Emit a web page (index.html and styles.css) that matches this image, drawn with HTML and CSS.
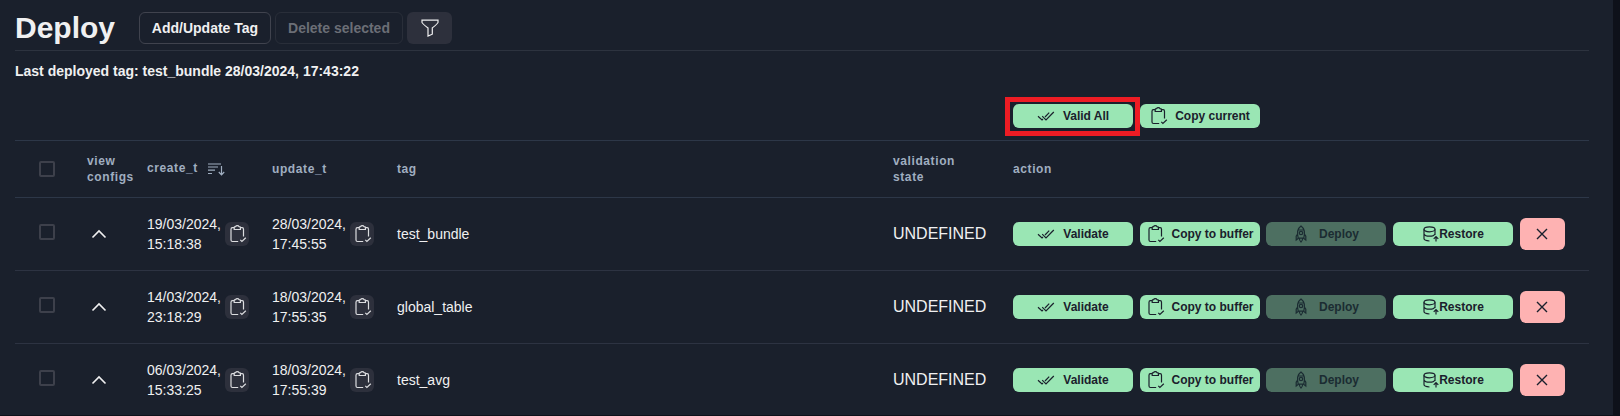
FILE: index.html
```html
<!DOCTYPE html>
<html lang="en">
<head>
<meta charset="utf-8">
<title>Deploy</title>
<link rel="stylesheet" href="styles.css">
</head>
<body>
<svg class="defs" width="0" height="0" aria-hidden="true">
  <symbol id="clip" viewBox="0 0 18 18"><path d="M5 2.700H3.400Q2 2.700 2 4.200V15Q2 16.500 3.500 16.500H9.200M11.700 2.700H13.200Q14.500 2.700 14.500 4.200V11.600M5.200 2.200Q5.200 1.800 6.500 1.700Q7 .6 8.300 .6T10.100 1.700Q11.400 1.800 11.400 2.200V4.500H5.200ZM11.300 14.800L12.900 16.400L16.800 12.800"/></symbol>
  <symbol id="checks" viewBox="0 0 18 10"><path d="M1 5.200L5 9L6 8M12.200 1.600L8 6M5.200 5.200L9 9L16.800 1"/></symbol>
  <symbol id="rocket" viewBox="0 0 12 18"><path d="M3.200 13.200Q1 4.500 6 1Q11 4.500 8.800 13.200ZM2.600 9L1.200 11.200V15L3.400 13.200M9.400 9L10.800 11.200V15L8.600 13.200M4.400 13.400Q4.200 15.500 6 17Q7.800 15.500 7.600 13.400M3.400 5H8.600"/><circle cx="6" cy="8" r="1.700"/></symbol>
  <symbol id="db" viewBox="0 0 16 16"><ellipse cx="6.500" cy="3.300" rx="5.500" ry="2.500"/><path d="M1 3.300V12.600Q1 14.700 6.500 15M12 3.300V9M1 8Q2 10.200 6.500 10.200Q11 10.200 12 8M13 15.500V10.700M10.700 12.800L13 10.500L15.300 12.800"/></symbol>
  <symbol id="close" viewBox="0 0 12 12"><path d="M1 1L11 11M11 1L1 11"/></symbol>
  <symbol id="up" viewBox="0 0 16 10"><path d="M1.500 8.500L8 2L14.500 8.500"/></symbol>
</svg>
<main class="page">
  <header class="top">
    <h1>Deploy</h1>
    <button class="btn add">Add/Update Tag</button>
    <button class="btn del" disabled>Delete selected</button>
    <button class="btn filter" aria-label="Filter"><svg width="18" height="18" viewBox="0 0 18 18"><path d="M1 1.200H17V3.500Q16.800 4.500 11.300 8.900V15.200L7 17V8.900Q1.200 4.500 1 3.500Z"/></svg></button>
  </header>
  <p class="last">Last deployed tag: test_bundle 28/03/2024, 17:43:22</p>
  <div class="bulk">
    <div class="marked"><button class="green"><svg class="i-checks"><use href="#checks"/></svg>Valid All</button></div>
    <button class="green"><svg class="i-clip"><use href="#clip"/></svg>Copy current</button>
  </div>
  <section class="table">
    <div class="row head">
      <span class="box"></span>
      <span class="c-view">view configs</span>
      <span class="c-create"><span>create_t</span><svg width="17" height="13" viewBox="0 0 17 13"><path d="M0 1H13M0 4H10M0 7.200H7M0 10.500H4M13.500 3V11.500M10.800 9L13.500 11.800L16.200 9"/></svg></span>
      <span>update_t</span>
      <span>tag</span>
      <span class="c-valid">validation state</span>
      <span>action</span>
    </div>
    <div class="row">
      <span class="box"></span>
      <svg class="i-up"><use href="#up"/></svg>
      <div class="date"><span>19/03/2024, 15:18:38</span><button class="copy"><svg class="i-clip"><use href="#clip"/></svg></button></div>
      <div class="date"><span>28/03/2024, 17:45:55</span><button class="copy"><svg class="i-clip"><use href="#clip"/></svg></button></div>
      <span>test_bundle</span>
      <span class="state">UNDEFINED</span>
      <div class="actions">
        <button class="green"><svg class="i-checks"><use href="#checks"/></svg>Validate</button>
        <button class="green"><svg class="i-clip"><use href="#clip"/></svg>Copy to buffer</button>
        <button class="green off" disabled><svg class="i-rocket"><use href="#rocket"/></svg>Deploy</button>
        <button class="green"><svg class="i-db"><use href="#db"/></svg>Restore</button>
        <button class="remove"><svg class="i-close"><use href="#close"/></svg></button>
      </div>
    </div>
    <div class="row">
      <span class="box"></span>
      <svg class="i-up"><use href="#up"/></svg>
      <div class="date"><span>14/03/2024, 23:18:29</span><button class="copy"><svg class="i-clip"><use href="#clip"/></svg></button></div>
      <div class="date"><span>18/03/2024, 17:55:35</span><button class="copy"><svg class="i-clip"><use href="#clip"/></svg></button></div>
      <span>global_table</span>
      <span class="state">UNDEFINED</span>
      <div class="actions">
        <button class="green"><svg class="i-checks"><use href="#checks"/></svg>Validate</button>
        <button class="green"><svg class="i-clip"><use href="#clip"/></svg>Copy to buffer</button>
        <button class="green off" disabled><svg class="i-rocket"><use href="#rocket"/></svg>Deploy</button>
        <button class="green"><svg class="i-db"><use href="#db"/></svg>Restore</button>
        <button class="remove"><svg class="i-close"><use href="#close"/></svg></button>
      </div>
    </div>
    <div class="row">
      <span class="box"></span>
      <svg class="i-up"><use href="#up"/></svg>
      <div class="date"><span>06/03/2024, 15:33:25</span><button class="copy"><svg class="i-clip"><use href="#clip"/></svg></button></div>
      <div class="date"><span>18/03/2024, 17:55:39</span><button class="copy"><svg class="i-clip"><use href="#clip"/></svg></button></div>
      <span>test_avg</span>
      <span class="state">UNDEFINED</span>
      <div class="actions">
        <button class="green"><svg class="i-checks"><use href="#checks"/></svg>Validate</button>
        <button class="green"><svg class="i-clip"><use href="#clip"/></svg>Copy to buffer</button>
        <button class="green off" disabled><svg class="i-rocket"><use href="#rocket"/></svg>Deploy</button>
        <button class="green"><svg class="i-db"><use href="#db"/></svg>Restore</button>
        <button class="remove"><svg class="i-close"><use href="#close"/></svg></button>
      </div>
    </div>
  </section>
</main>
</body>
</html>
```
FILE: styles.css
```css
* { box-sizing: border-box; }
body {
  margin: 0;
  height: 416px;
  overflow: hidden;
  background: #0e111a;
  color: #f0f0f1;
  font: 14px/20px "Liberation Sans", Arial, sans-serif;
}
.defs { display: block; height: 0; }
svg { fill: none; stroke: currentColor; stroke-width: 1.2; flex: none; }
button {
  display: flex;
  align-items: center;
  justify-content: center;
  border: 0;
  padding: 0;
  margin: 0;
  background: none;
  font: inherit;
  color: inherit;
  white-space: nowrap;
}
.page {
  width: 1613px;
  height: 415px;
  padding: 0 24px 0 15px;
  overflow: hidden;
  background: #1a202c;
}
.top {
  display: flex;
  height: 51px;
  padding-top: 12px;
  border-bottom: 1px solid #2d333f;
}
h1 { margin: 0; width: 124px; font-size: 30px; line-height: 31px; font-weight: 700; }
.btn { height: 32px; border-radius: 6px; font-weight: 700; }
.add { width: 132px; margin-right: 4px; border: 1px solid #40434e; }
.del { width: 128px; margin-right: 4px; border: 1px solid #292e39; color: #6b6e76; }
.filter { width: 45px; background: #2d303c; }
.last { margin: 10px 0 0; font-weight: 700; line-height: 20px; }
.bulk { display: flex; height: 59px; padding: 16px 0 0 990px; }
.bulk > .green { margin-top: 7px; }
.marked { width: 135px; height: 39px; padding: 2px 0 0 3px; border: 5px solid #ed1c24; }
.green {
  width: 120px;
  height: 24px;
  border-radius: 6px;
  background: #9ae6b4;
  color: #1a202c;
  font-size: 12px;
  font-weight: 700;
}
.off { background: #4d6f61; color: #1b2c32; }
.row {
  display: grid;
  grid-template-columns: 48px 60px 125px 125px 496px 120px 1fr;
  align-items: center;
  height: 73px;
  padding-left: 24px;
  border-bottom: 1px solid #2d3342;
}
.head {
  height: 58px;
  border-top: 1px solid #2d3748;
  border-bottom-color: #2d3748;
  color: #a0aec0;
  font-size: 12px;
  line-height: 16px;
  font-weight: 700;
  letter-spacing: .6px;
}
.c-view { width: 50px; }
.c-valid { width: 70px; }
.c-create { display: flex; align-items: center; gap: 10px; }
.c-create span { padding-bottom: 2px; }
.box { width: 16px; height: 16px; border: 2px solid #3d404b; border-radius: 2px; }
.row:not(.head) .box { margin-top: -4px; }
.date { display: flex; align-items: center; gap: 3px; }
.date span { width: 75px; }
.copy { width: 24px; height: 24px; padding-left: 1px; border-radius: 6px; background: #2d303c; color: #dcdde0; }
.state { font-size: 16px; }
.actions { display: flex; align-items: center; }
.actions .green { margin-right: 7px; }
.actions .green:nth-child(2) { margin-right: 6px; }
.remove { width: 45px; height: 32px; padding-right: 1px; border-radius: 6px; background: #feb2b2; color: #1a202c; }
.i-up { width: 16px; height: 10px; margin-left: 4px; stroke-width: 1.6; }
.i-clip { width: 18px; height: 18px; }
.green .i-clip { margin-right: 7px; }
.i-checks { width: 18px; height: 10px; margin-right: 8px; }
.i-rocket { width: 12px; height: 18px; margin-right: 12px; margin-left: 2px; }
.i-db { width: 16px; height: 16px; margin-left: 1px; }
.i-close { width: 12px; height: 12px; stroke-width: 1.4; }
```
